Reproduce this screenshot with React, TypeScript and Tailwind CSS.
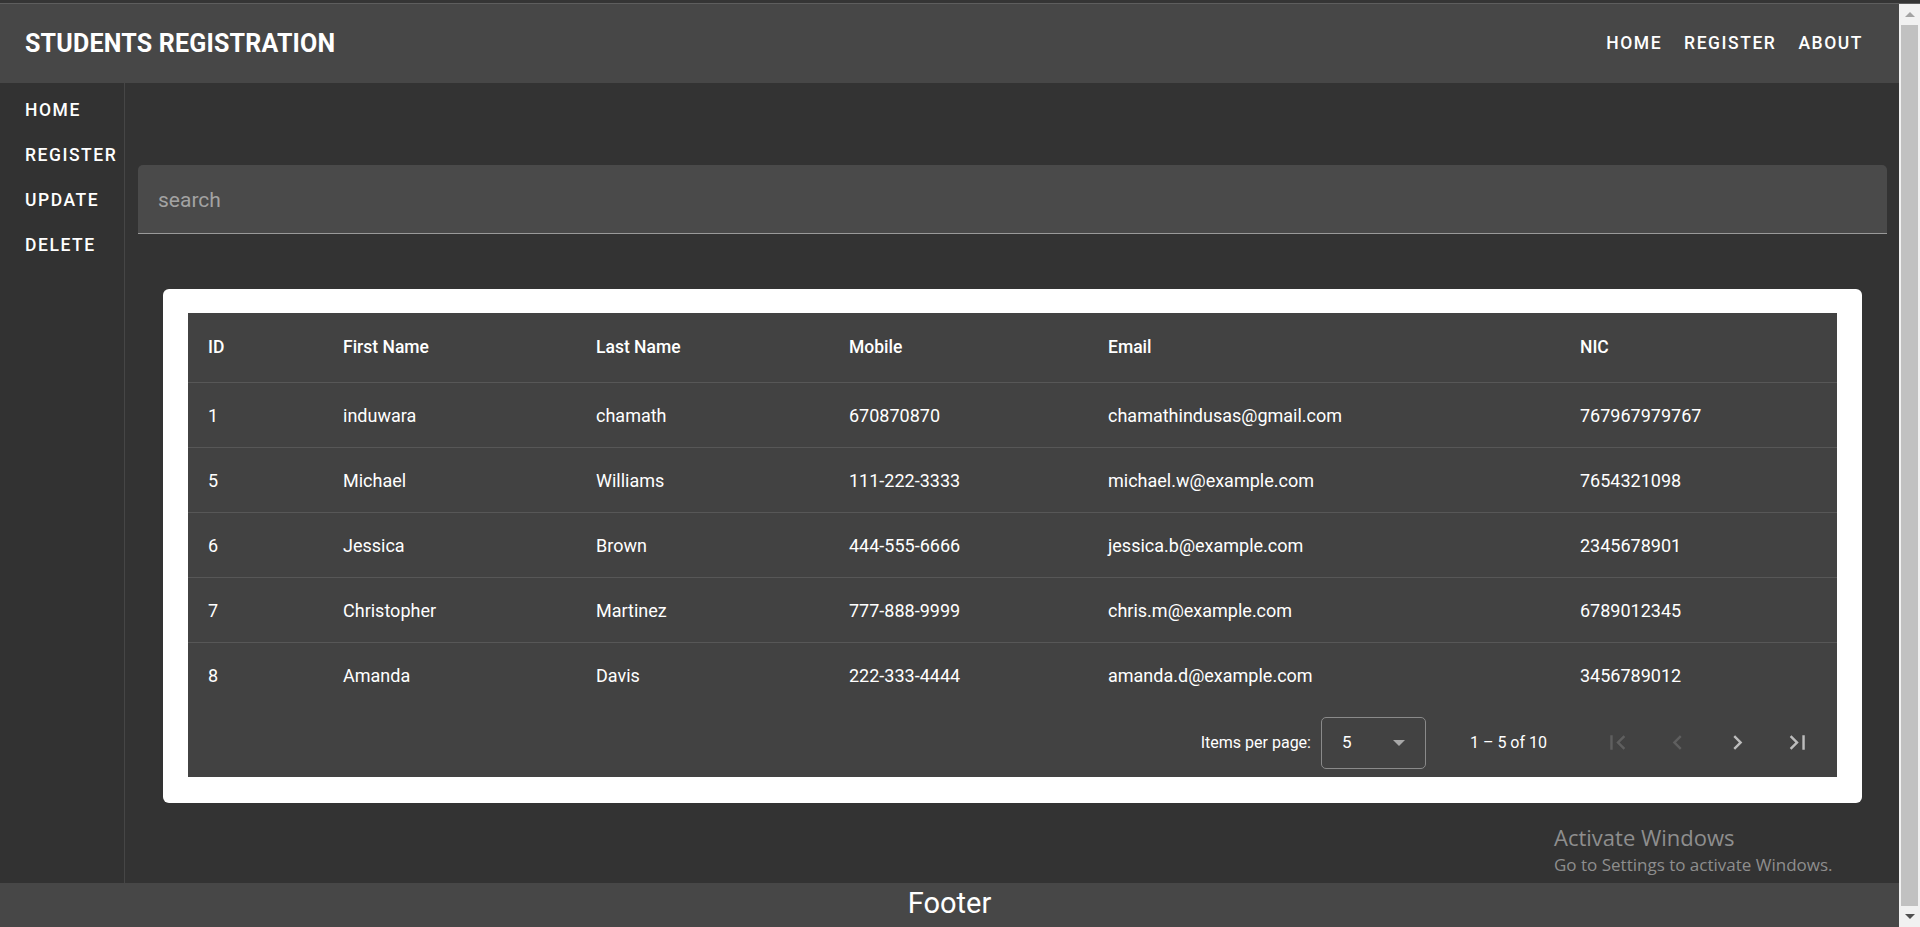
import React from 'react';

type Student = {
    id: number;
    firstName: string;
    lastName: string;
    mobile: string;
    email: string;
    nic: string;
};

const students: Student[] = [
    { id: 1, firstName: 'induwara', lastName: 'chamath', mobile: '670870870', email: 'chamathindusas@gmail.com', nic: '767967979767' },
    { id: 5, firstName: 'Michael', lastName: 'Williams', mobile: '111-222-3333', email: 'michael.w@example.com', nic: '7654321098' },
    { id: 6, firstName: 'Jessica', lastName: 'Brown', mobile: '444-555-6666', email: 'jessica.b@example.com', nic: '2345678901' },
    { id: 7, firstName: 'Christopher', lastName: 'Martinez', mobile: '777-888-9999', email: 'chris.m@example.com', nic: '6789012345' },
    { id: 8, firstName: 'Amanda', lastName: 'Davis', mobile: '222-333-4444', email: 'amanda.d@example.com', nic: '3456789012' },
];

const cols = 'grid grid-cols-[135px_253px_253px_259px_472px_1fr] pl-[20px] items-center';

const PageIcon = ({ d, disabled }: { d: string; disabled?: boolean }) => (
    <button
        type="button"
        className={`w-[60px] h-[60px] flex items-center justify-center ${disabled ? 'text-[#5f5f5f]' : 'text-[#bdbdbd]'}`}
    >
        <svg viewBox="0 0 24 24" className="w-[29px] h-[29px]" fill="currentColor">
            <path d={d} />
        </svg>
    </button>
);

const Scrollbar = () => (
    <div className="w-[21px] bg-[#f1f1f1] flex flex-col items-center shrink-0">
        <div className="h-[21px] flex items-center justify-center">
            <div className="w-0 h-0 border-l-[5px] border-r-[5px] border-b-[5px] border-l-transparent border-r-transparent border-b-[#a3a3a3]" />
        </div>
        <div className="flex-1 w-[17px] bg-[#c1c1c1]" />
        <div className="h-[21px] flex items-center justify-center">
            <div className="w-0 h-0 border-l-[5px] border-r-[5px] border-t-[5px] border-l-transparent border-r-transparent border-t-[#505050]" />
        </div>
    </div>
);

export default function App() {
    const navBtn = 'text-white text-[17.5px] font-medium tracking-[1.55px] uppercase';

    return (
        <div className="h-[927px] w-full flex flex-col bg-[#333333] font-['Roboto',sans-serif] overflow-hidden relative">
            <div className="h-[4px] bg-[#353535] border-b border-[#5e5e5e] shrink-0" />
            <div className="flex flex-1 min-h-0">
                <div className="flex-1 flex flex-col min-w-0">
                    {/* top toolbar */}
                    <header className="h-[79px] bg-[#474747] flex items-center justify-between pl-[25px] pr-[36px] shrink-0">
                        <h1 className="text-white text-[25px] font-bold tracking-[0.2px]">STUDENTS REGISTRATION</h1>
                        <nav className="flex items-center gap-[22px]">
                            <a className={navBtn}>Home</a>
                            <a className={navBtn}>Register</a>
                            <a className={navBtn}>About</a>
                        </nav>
                    </header>

                    <div className="flex flex-1 min-h-0">
                        {/* side nav */}
                        <aside className="w-[125px] bg-[#323232] border-r border-[#464646] pt-[5px] shrink-0">
                            {['Home', 'Register', 'Update', 'Delete'].map((item) => (
                                <a key={item} className={`${navBtn} h-[45px] flex items-center pl-[25px]`}>
                                    {item}
                                </a>
                            ))}
                        </aside>

                        <main className="flex-1 min-w-0 pt-[82px] pl-[13px] pr-[12px]">
                            <div className="h-[69px] bg-[#4a4a4a] rounded-t-[5px] border-b border-[#9a9a9a] flex items-center px-[20px] pt-[3px]">
                                <input
                                    placeholder="search"
                                    className="w-full bg-transparent outline-none text-white text-[21px] placeholder:text-[#a3a3a3]"
                                />
                            </div>

                            <div className="mt-[55px] mx-[25px] bg-white rounded-[6px] pt-[24px] pb-[26px] px-[25px]">
                                <div className="bg-[#424242] text-white">
                                    <div className={`${cols} h-[70px] border-b border-[#575757] text-[17.5px] font-medium`}>
                                        <div>ID</div>
                                        <div>First Name</div>
                                        <div>Last Name</div>
                                        <div>Mobile</div>
                                        <div>Email</div>
                                        <div>NIC</div>
                                    </div>
                                    {students.map((s, i) => (
                                        <div
                                            key={s.id}
                                            className={`${cols} h-[65px] text-[18px] ${i < students.length - 1 ? 'border-b border-[#575757]' : ''}`}
                                        >
                                            <div>{s.id}</div>
                                            <div>{s.firstName}</div>
                                            <div>{s.lastName}</div>
                                            <div>{s.mobile}</div>
                                            <div>{s.email}</div>
                                            <div>{s.nic}</div>
                                        </div>
                                    ))}

                                    {/* paginator */}
                                    <div className="h-[69px] flex items-center justify-end pr-[10px] text-[16px]">
                                        <span className="mr-[10px]">Items per page:</span>
                                        <div className="w-[105px] h-[52px] border border-[#8a8a8a] rounded-[5px] flex items-center justify-between pl-[20px] pr-[20px] text-[17px]">
                                            <span>5</span>
                                            <svg viewBox="0 0 10 5" className="w-[12px] h-[6px]" fill="#a8a8a8">
                                                <path d="M0 0l5 5 5-5z" />
                                            </svg>
                                        </div>
                                        <span className="ml-[44px] mr-[40px] text-[16px]">1 – 5 of 10</span>
                                        <PageIcon disabled d="M18.41 16.59L13.82 12l4.59-4.59L17 6l-6 6 6 6zM6 6h2v12H6z" />
                                        <PageIcon disabled d="M15.41 7.41L14 6l-6 6 6 6 1.41-1.41L10.83 12z" />
                                        <PageIcon d="M10 6L8.59 7.41 13.17 12l-4.58 4.59L10 18l6-6z" />
                                        <PageIcon d="M5.59 7.41L10.18 12l-4.59 4.59L7 18l6-6-6-6zM16 6h2v12h-2z" />
                                    </div>
                                </div>
                            </div>
                        </main>
                    </div>

                    <footer className="h-[44px] bg-[#474747] flex items-center justify-center shrink-0">
                        <span className="text-white text-[29px] leading-none -mt-[3px]">Footer</span>
                    </footer>
                </div>
                <Scrollbar />
            </div>

            {/* windows activation watermark */}
            <div className="absolute left-[1554px] top-[822px] text-[#8e8e8e] font-['Open_Sans',sans-serif] pointer-events-none">
                <div className="text-[22px] leading-[30px]">Activate Windows</div>
                <div className="text-[17px] leading-[26px]">Go to Settings to activate Windows.</div>
            </div>
        </div>
    );
}
